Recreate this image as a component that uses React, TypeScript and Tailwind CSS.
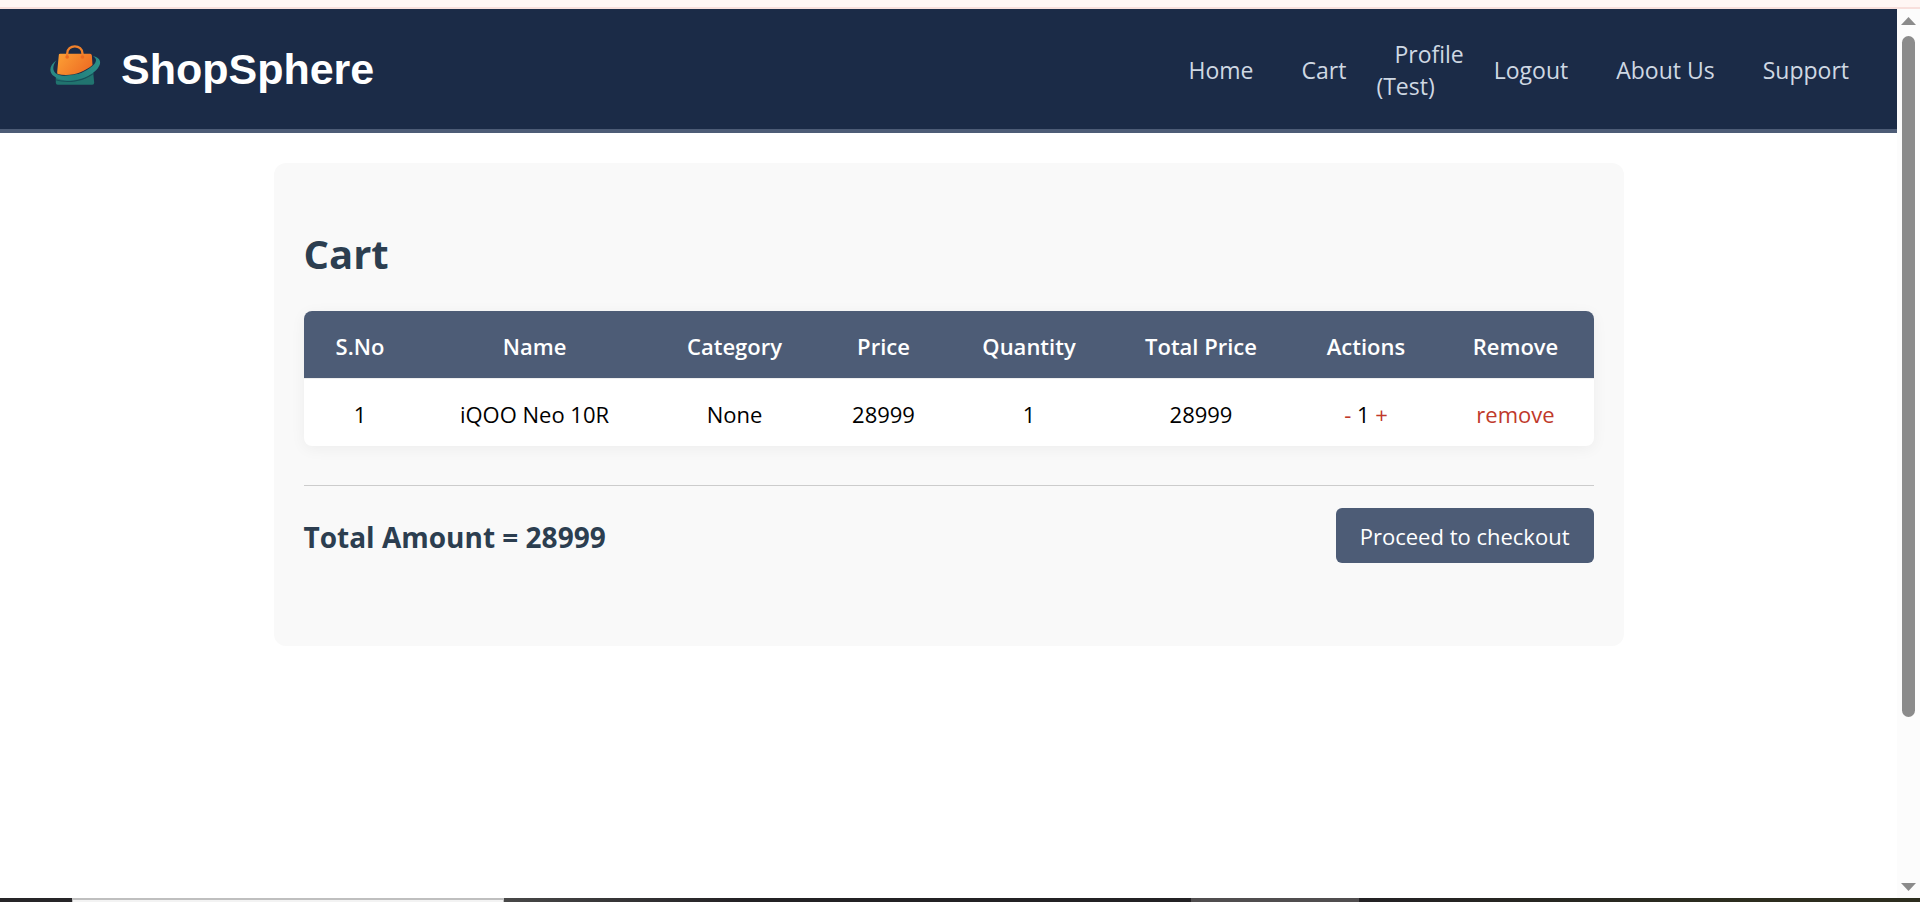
import React from "react";

const navLinks = [
  { label: "Home", href: "#home" },
  { label: "Cart", href: "#cart" },
  { label: "Profile", href: "#profile", note: "(Test)" },
  { label: "Logout", href: "#logout" },
  { label: "About Us", href: "#about" },
  { label: "Support", href: "#support" },
];

const columns = [
  { label: "S.No", width: "w-[113px]" },
  { label: "Name", width: "w-[236px]" },
  { label: "Category", width: "w-[164px]" },
  { label: "Price", width: "w-[134px]" },
  { label: "Quantity", width: "w-[157px]" },
  { label: "Total Price", width: "w-[187px]" },
  { label: "Actions", width: "w-[143px]" },
  { label: "Remove", width: "w-[156px]" },
];

const items = [{ name: "iQOO Neo 10R", category: "None", price: 28999, quantity: 1 }];

function Logo() {
  return (
    <svg viewBox="30 31 152 120" className="h-10 w-[51px]" aria-hidden="true">
      <defs>
        <linearGradient id="bag" x1="0" y1="0.2" x2="1" y2="0.7">
          <stop offset="0" stopColor="#fb9d34" />
          <stop offset="1" stopColor="#ee6b23" />
        </linearGradient>
        <linearGradient id="ring" x1="0" y1="0" x2="1" y2="0">
          <stop offset="0" stopColor="#2b8b86" />
          <stop offset="0.5" stopColor="#22807d" />
          <stop offset="1" stopColor="#2b8f88" />
        </linearGradient>
      </defs>
      <path d="M47 126 L159 112 L162 144 Q162 150 156 150 H53 Q47 150 47 144 Z" fill="#21746f" />
      <path d="M46 134 C88 147 132 133 160 114 L160 118 C132 139 88 149 46 137 Z" fill="#17505a" />
      <path
        d="M49 77 C28 91 24 113 42 125 C67 145 119 140 151 119 C186 98 190 70 158 64 C172 72 172 85 148 101 C116 124 75 130 50 118 C36 110 36 94 49 77 Z"
        fill="url(#ring)"
      />
      <path
        d="M60 57 H150 Q154 57 155 62 L157 91 C130 114 91 127 52 118 L51 113 L56 60 Q56 57 60 57 Z"
        fill="url(#bag)"
      />
      <path d="M81 66 V57 C81 28 127 28 127 57 V66" fill="none" stroke="#f0812b" strokeWidth="7" />
      <circle cx="81" cy="67" r="5.5" fill="#ec6a20" />
      <circle cx="127" cy="67" r="5.5" fill="#ec6a20" />
    </svg>
  );
}

function Header() {
  return (
    <header className="flex h-[124px] items-center justify-between border-b-4 border-[#4d5c76] bg-[#1b2b47] pr-[30px] pl-[50px]">
      <a href="#home" className="flex items-center gap-5 pb-2">
        <Logo />
        <span className="pt-2 font-['Liberation_Sans',Arial,sans-serif] text-[43px] leading-[52px] font-bold text-white">
          ShopSphere
        </span>
      </a>
      <nav className="pt-[2px]">
        <ul className="flex items-center gap-3 text-[23px] leading-8 text-[#cfd8e3]">
          {navLinks.map((link) => (
            <li key={link.label}>
              <a href={link.href} className="px-[18px] whitespace-nowrap">
                {link.label}
                {link.note && (
                  <>
                    <br />
                    {link.note}
                  </>
                )}
              </a>
            </li>
          ))}
        </ul>
      </nav>
    </header>
  );
}

function CartTable() {
  return (
    <div className="overflow-hidden rounded-lg bg-white shadow-[0_3px_15px_rgba(0,0,0,0.05)]">
      <table className="w-full table-fixed border-collapse text-center text-[22px] leading-[30px] text-black">
        <colgroup>
          {columns.map((column) => (
            <col key={column.label} className={column.width} />
          ))}
        </colgroup>
        <thead>
          <tr className="h-[67px] bg-[#4d5c76] text-white">
            {columns.map((column) => (
              <th key={column.label} scope="col" className="pt-1 font-semibold">
                {column.label}
              </th>
            ))}
          </tr>
        </thead>
        <tbody>
          {items.map((item, index) => (
            <tr key={item.name} className="h-[68px] border-t border-[#eeeeee]">
              <td className="pt-1">{index + 1}</td>
              <td className="pt-1">{item.name}</td>
              <td className="pt-1">{item.category}</td>
              <td className="pt-1">{item.price}</td>
              <td className="pt-1">{item.quantity}</td>
              <td className="pt-1">{item.price * item.quantity}</td>
              <td className="pt-1">
                <button type="button" aria-label="Decrease quantity" className="font-medium text-[#c0392b]">
                  -
                </button>{" "}
                {item.quantity}{" "}
                <button type="button" aria-label="Increase quantity" className="font-medium text-[#c0392b]">
                  +
                </button>
              </td>
              <td className="pt-1">
                <button type="button" className="font-medium text-[#c0392b]">
                  remove
                </button>
              </td>
            </tr>
          ))}
        </tbody>
      </table>
    </div>
  );
}

function Scrollbar() {
  return (
    <div className="flex w-[23px] shrink-0 flex-col items-center bg-[#fcfcfc] pt-2 pb-[7px]" aria-hidden="true">
      <svg viewBox="0 0 15 8" className="h-2 w-[15px] fill-[#8b8b8b]">
        <path d="M7.5 0 L15 8 H0 Z" />
      </svg>
      <div className="flex w-[13px] grow flex-col pt-[11px]">
        <div className="grow-[681] rounded-full bg-[#8b8b8b]" />
        <div className="grow-[166]" />
      </div>
      <svg viewBox="0 0 15 8" className="h-2 w-[15px] fill-[#8b8b8b]">
        <path d="M0 0 H15 L7.5 8 Z" />
      </svg>
    </div>
  );
}

export default function App() {
  const total = items.reduce((sum, item) => sum + item.price * item.quantity, 0);

  return (
    <div className="flex min-h-screen flex-col bg-white font-['Open_Sans','Noto_Sans',sans-serif]">
      <div className="h-[9px] border-b-2 border-[#f8dfdc] bg-[#fff6f4]" />
      <div className="flex grow">
        <div className="min-w-0 grow">
          <Header />
          <main className="mx-auto mt-[30px] max-w-[1350px] rounded-xl bg-[#f9f9f9] px-[30px] pt-[63px] pb-[83px]">
            <h1 className="mb-[29px] text-[40px] leading-[56px] font-bold text-[#2c3e50]">Cart</h1>
            <CartTable />
            <div className="mt-[39px] flex items-center justify-between border-t border-[#cccccc] pt-[22px]">
              <h2 className="pt-[2px] text-[28px] leading-10 font-bold text-[#2c3e50]">Total Amount = {total}</h2>
              <button
                type="button"
                className="h-[55px] rounded-md bg-[#4d5c76] px-6 text-[22px] leading-[30px] text-white"
              >
                Proceed to checkout
              </button>
            </div>
          </main>
        </div>
        <Scrollbar />
      </div>
      <div className="flex h-1" aria-hidden="true">
        <div className="w-[72px] bg-[#262528]" />
        <div className="w-[432px] border-x border-t-2 border-[#bfbfbf] bg-[#f3f3f3]" />
        <div className="w-[687px] bg-linear-to-r from-[#484848] to-[#232124] to-35%" />
        <div className="w-[168px] bg-[#504e4f]" />
        <div className="grow bg-linear-to-r from-[#232124] to-[#2c2d1e] to-70%" />
      </div>
    </div>
  );
}
